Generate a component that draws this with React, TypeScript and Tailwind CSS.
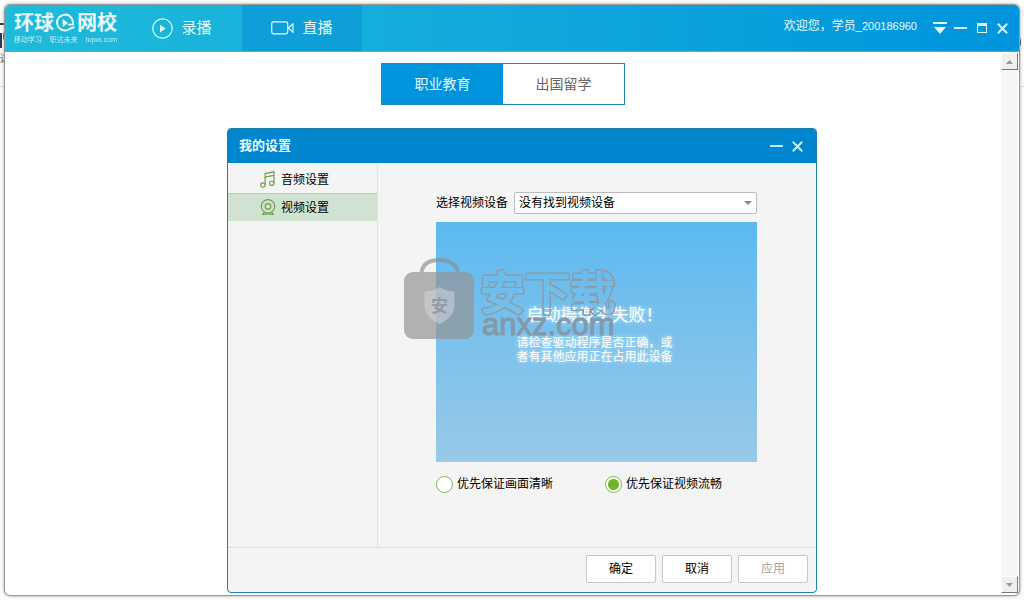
import { useState } from "react";
import clsx from "clsx";

const PlayIcon = () => (
  <svg width="21" height="21" viewBox="0 0 21 21" fill="none">
    <circle cx="10.5" cy="10.5" r="9.7" stroke="currentColor" strokeWidth="1.2" />
    <path d="M8 6.500 13.400 10.500 8 14.500Z" fill="currentColor" />
  </svg>
);

const CameraIcon = () => (
  <svg
    width="23"
    height="14"
    viewBox="0 0 23 14"
    fill="none"
    stroke="currentColor"
    strokeWidth="1.2"
  >
    <rect x="0.7" y="0.9" width="16" height="12" rx="1.8" />
    <path d="M22 2.6v8.8L17.6 7Z" strokeLinejoin="round" />
  </svg>
);

const MusicIcon = () => (
  <svg width="16" height="17" viewBox="0 0 16 17" fill="none" stroke="#6fa04c" strokeWidth="1.2">
    <circle cx="2.9" cy="14" r="2.2" />
    <circle cx="11.8" cy="12.2" r="2.2" />
    <path d="M5.1 14V2.6L14 .8v11.4M5.1 6.2 14 4.4" />
  </svg>
);

const WebcamIcon = () => (
  <svg width="16" height="17" viewBox="0 0 16 17" fill="none" stroke="#6fa04c" strokeWidth="1.2">
    <circle cx="8" cy="7.4" r="6.7" />
    <circle cx="8" cy="7.4" r="2.8" />
    <path d="M4.4 13.2 2.2 16M11.6 13.2 13.8 16M2.6 15.8Q8 14 13.4 15.8" />
  </svg>
);

const Logo = () => (
  <div className="flex w-[117px] shrink-0 flex-col pt-[5px] pr-[5px] pl-[9px] text-[#e9fbff]">
    <div className="flex items-center justify-between text-[20px] leading-[26px] font-bold">
      <span>环球</span>
      <svg width="21" height="20" viewBox="0 0 21 20" fill="none">
        <path
          d="M18 9A8 8 0 1 0 10.5 17.6C14.500 17.600 15 14 19.500 14.600"
          stroke="currentColor"
          strokeWidth="2"
        />
        <path d="M18 8v3.700h-5" stroke="currentColor" strokeWidth="1.8" />
        <path d="M7.6 6 13 10 7.6 14Z" fill="currentColor" />
      </svg>
      <span>网校</span>
    </div>
    <div className="flex justify-between text-[7px] leading-[8px] whitespace-nowrap opacity-80">
      <span>移动学习</span>
      <span>职达未来</span>
      <span>hqwx.com</span>
    </div>
  </div>
);

const mainTabs = [
  { id: "record", label: "录播", icon: <PlayIcon /> },
  { id: "live", label: "直播", icon: <CameraIcon /> },
];

const Header = () => {
  const [tab, setTab] = useState("live");

  return (
    <header className="flex h-[47px] shrink-0 rounded-t-[5px] border-b border-[#6fa3b5] bg-linear-to-r from-[#1fbbd9] via-[#12a8dc] to-[#0094dc] text-[#e4faff]">
      <Logo />
      <nav className="flex">
        {mainTabs.map((item) => (
          <button
            key={item.id}
            onClick={() => setTab(item.id)}
            className={clsx(
              "flex w-[120px] items-center justify-center gap-2 text-[15px]",
              tab === item.id && "bg-[#0e9fd8]"
            )}
          >
            {item.icon}
            {item.label}
          </button>
        ))}
      </nav>
      <div className="ml-auto flex items-center pr-1.5">
        <p className="mr-3 pb-1 text-[12px] leading-4 whitespace-nowrap">
          欢迎您，学员<span className="text-[11px]">_200186960</span>
        </p>
        <button aria-label="菜单" className="flex h-5 w-[21px] items-center justify-center">
          <svg width="14" height="13" viewBox="0 0 14 13" fill="currentColor">
            <path d="M0 0h14v2H0ZM1 5h12L7 12Z" />
          </svg>
        </button>
        <button aria-label="最小化" className="flex h-5 w-[21px] items-center justify-center">
          <svg width="13" height="2" viewBox="0 0 13 2" fill="currentColor">
            <path d="M0 0h13v2H0Z" />
          </svg>
        </button>
        <button aria-label="最大化" className="flex h-5 w-[21px] items-center justify-center">
          <svg width="10" height="10" viewBox="0 0 10 10" fill="currentColor">
            <path d="M0 0h10v10H0ZM1 3v6h8V3Z" fillRule="evenodd" />
          </svg>
        </button>
        <button aria-label="关闭" className="flex h-5 w-[21px] items-center justify-center">
          <svg width="11" height="11" viewBox="0 0 11 11" stroke="currentColor" strokeWidth="2">
            <path d="m.8.8 9.4 9.4M10.2.8.8 10.2" />
          </svg>
        </button>
      </div>
    </header>
  );
};

const Scrollbar = () => (
  <div className="flex w-[17px] shrink-0 flex-col justify-between bg-[#f6f6f6]">
    <button
      aria-label="向上滚动"
      className="flex h-[17px] items-center justify-center border border-t-white border-r-[#777] border-b-[#777] border-l-white bg-[#efefef]"
    >
      <svg width="7" height="4" viewBox="0 0 7 4" fill="#999">
        <path d="M0 4 3.500 0 7 4Z" />
      </svg>
    </button>
    <button
      aria-label="向下滚动"
      className="flex h-[17px] items-center justify-center border border-t-white border-r-[#777] border-b-[#777] border-l-white bg-[#efefef]"
    >
      <svg width="7" height="4" viewBox="0 0 7 4" fill="#999">
        <path d="M0 0h7L3.500 4Z" />
      </svg>
    </button>
  </div>
);

const Watermark = () => (
  <svg
    width="216"
    height="86"
    viewBox="0 0 216 86"
    className="pointer-events-none absolute top-9 -left-8 [text-shadow:none]"
  >
    <defs>
      {/* cuts the letters out so only their outer contour stays */}
      <mask id="outline" maskUnits="userSpaceOnUse" x="0" y="0" width="216" height="86">
        <rect width="216" height="86" fill="white" />
        <text
          x="76"
          y="52"
          fontSize="45"
          fill="black"
          stroke="black"
          strokeWidth="2"
          strokeLinejoin="round"
        >
          安下载
        </text>
      </mask>
    </defs>
    <path
      d="M17.500 14C19 5.500 26 2 35.500 2S52 5.500 54 14"
      fill="none"
      stroke="#8c8c8c"
      strokeWidth="4"
      opacity="0.65"
    />
    <rect y="14" width="70" height="67" rx="9" fill="#949494" opacity="0.7" />
    <path
      d="M35.500 29C31 32 26 33 20.500 33.500V47C20.500 56 27 62 35.500 66 44 62 50.500 56 50.500 47V33.500C45 33 40 32 35.500 29Z"
      fill="#d4dce2"
      opacity="0.5"
    />
    <text x="27" y="54" fontSize="17" fontWeight="700" fill="#959ca1">
      安
    </text>
    <g mask="url(#outline)">
      <text
        x="76"
        y="52"
        fontSize="45"
        fill="none"
        stroke="#8a9dac"
        strokeWidth="5"
        strokeLinejoin="round"
      >
        安下载
      </text>
    </g>
    <text
      x="78"
      y="77"
      fontSize="31"
      fill="#8299ab"
      stroke="#8299ab"
      strokeWidth="1"
    >
      anxz.com
    </text>
  </svg>
);

const sideItems = [
  { id: "audio", label: "音频设置", icon: <MusicIcon /> },
  { id: "video", label: "视频设置", icon: <WebcamIcon /> },
];

const qualityOptions = [
  { value: "clear", label: "优先保证画面清晰" },
  { value: "smooth", label: "优先保证视频流畅" },
];

const SettingsDialog = () => {
  const [section, setSection] = useState("video");
  const [quality, setQuality] = useState("smooth");

  return (
    <div
      role="dialog"
      aria-label="我的设置"
      className="flex w-[590px] flex-col rounded-[4px] border border-[#1b7fa8] bg-[#f4f4f4] text-[12px] text-black"
    >
      <div className="flex h-[34px] items-center rounded-t-[3px] bg-[#0085cf] pr-2 pl-[11px] text-[#eafaff]">
        <h2 className="text-[13px] font-bold">我的设置</h2>
        <button
          aria-label="最小化"
          className="ml-auto flex h-5 w-[21px] items-center justify-center"
        >
          <svg width="13" height="2" viewBox="0 0 13 2" fill="#bdf0ff">
            <path d="M0 0h13v2H0Z" />
          </svg>
        </button>
        <button aria-label="关闭" className="flex h-5 w-[21px] items-center justify-center">
          <svg width="11" height="11" viewBox="0 0 11 11" stroke="#bdf0ff" strokeWidth="2">
            <path d="m.8.8 9.4 9.4M10.2.8.8 10.2" />
          </svg>
        </button>
      </div>

      <div className="flex h-[384px]">
        <aside className="w-[150px] border-r border-[#e2e2e2] pt-0.5">
          {sideItems.map((item) => (
            <button
              key={item.id}
              onClick={() => setSection(item.id)}
              className={clsx(
                "flex h-7 w-full items-center gap-[5px] border-t pl-8",
                section === item.id
                  ? "border-[#b5cdb5] bg-[#d0e3d0]"
                  : "border-transparent"
              )}
            >
              {item.icon}
              {item.label}
            </button>
          ))}
        </aside>

        <div className="pt-[29px] pl-[58px]">
          <div className="flex w-[321px] items-center justify-between">
            <label htmlFor="device">选择视频设备</label>
            <div className="relative">
              <select
                id="device"
                className="block h-[22px] w-[243px] appearance-none rounded-[2px] border border-[#bcbcbc] bg-white pl-1 text-[12px] leading-4"
              >
                <option>没有找到视频设备</option>
              </select>
              <svg
                width="8"
                height="4"
                viewBox="0 0 8 4"
                fill="#888"
                className="pointer-events-none absolute top-[9px] right-[5px]"
              >
                <path d="M0 0h8L4 4Z" />
              </svg>
            </div>
          </div>

          <div className="relative mt-2 h-[240px] w-[321px] bg-linear-to-b from-[#5bb9f0] to-[#98c9e7] pt-[85px] pr-1 text-center text-white [text-shadow:0_0_4px_#d5efff]">
            <p className="text-[17px] leading-[18px]">启动摄像头失败！</p>
            <p className="mt-[11px] text-[12px] leading-[14px]">
              请检查驱动程序是否正确，或
              <br />
              者有其他应用正在占用此设备
            </p>
            <Watermark />
          </div>

          <div className="mt-[13px] flex gap-[52px]">
            {qualityOptions.map((option) => (
              <label key={option.value} className="flex items-center gap-1">
                <input
                  type="radio"
                  name="quality"
                  value={option.value}
                  checked={quality === option.value}
                  onChange={() => setQuality(option.value)}
                  className="h-[17px] w-[17px] appearance-none rounded-full border border-[#79b84a] bg-white checked:bg-[radial-gradient(circle,#6fb52c_5px,white_6px)]"
                />
                {option.label}
              </label>
            ))}
          </div>
        </div>
      </div>

      <div className="flex justify-end gap-1.5 border-t border-[#dcdcdc] pt-[7px] pr-2 pb-[9px]">
        <button className="h-7 w-[70px] rounded-[2px] border border-[#c6c6c6] bg-white">
          确定
        </button>
        <button className="h-7 w-[70px] rounded-[2px] border border-[#c6c6c6] bg-white">
          取消
        </button>
        <button
          disabled
          className="h-7 w-[70px] rounded-[2px] border border-[#c6c6c6] bg-white text-[#a3a3a3]"
        >
          应用
        </button>
      </div>
    </div>
  );
};

const App = () => {
  const [category, setCategory] = useState("职业教育");

  return (
    <div className="relative flex min-h-screen overflow-hidden bg-[#fcfcfc] p-1 font-['Liberation_Sans','Noto_Sans_CJK_SC',sans-serif]">
      {/* page behind the window */}
      <svg width="5" height="100" viewBox="0 0 5 100" className="absolute top-0 left-0">
        <path d="M0 24h5M1 33v15" stroke="#26364f" strokeWidth="2" />
        <path d="M5 32Q3 36 5 41" stroke="#26364f" strokeWidth="2" fill="none" />
        <path d="M0 86.500h5" stroke="#dedede" />
      </svg>
      <span className="absolute top-[52px] left-0 text-[10px] leading-[14px] text-[#555]">
        这
      </span>
      <svg width="5" height="100" viewBox="0 0 5 100" className="absolute top-0 right-0">
        <path d="M0 37Q2 42 0 47" stroke="#26364f" strokeWidth="2" fill="none" />
        <path d="M0 86.500h5" stroke="#dedede" />
      </svg>

      <div className="relative flex flex-1 flex-col rounded-[6px] border border-[#9a9a9a] bg-white shadow-[0_0_3px_#999]">
        <Header />
        <div className="flex flex-1 pt-px pr-px pb-0.5">
          <main className="flex flex-1 justify-center pt-[10px]">
            <div className="flex h-[42px] border border-[#2489b5]">
              {["职业教育", "出国留学"].map((name) => (
                <button
                  key={name}
                  onClick={() => setCategory(name)}
                  className={clsx(
                    "w-[121px] text-[14px]",
                    category === name ? "bg-[#0094dc] text-[#e4faff]" : "text-[#666]"
                  )}
                >
                  {name}
                </button>
              ))}
            </div>
          </main>
          <Scrollbar />
        </div>

        <div className="absolute inset-0 flex items-start justify-center pt-[123px] pl-5">
          <SettingsDialog />
        </div>
      </div>
    </div>
  );
};

export default App;
